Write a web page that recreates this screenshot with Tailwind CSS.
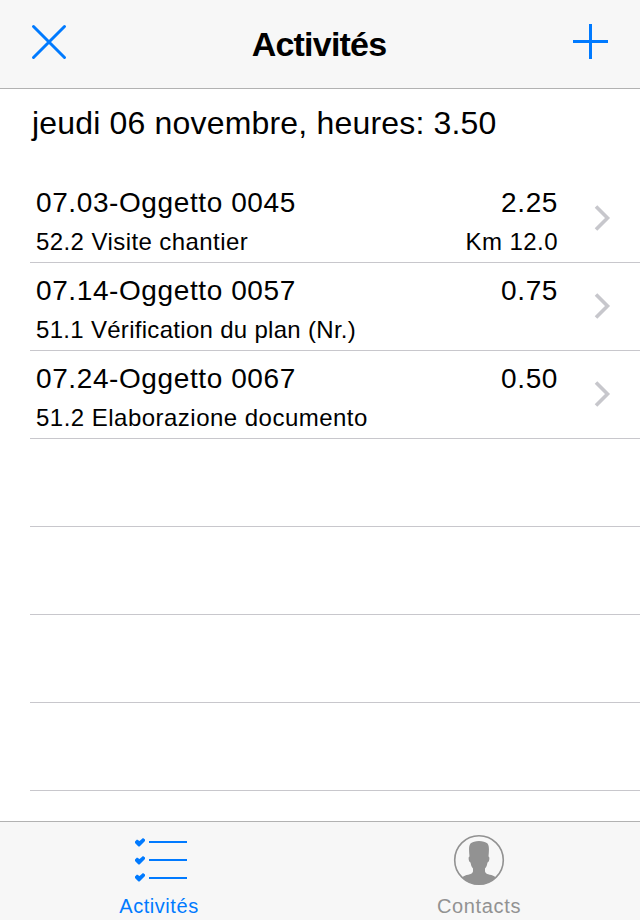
<!DOCTYPE html>
<html lang="fr">
<head>
    <meta charset="UTF-8">
    <meta name="viewport" content="width=device-width, initial-scale=1.0">
    <title>Activités</title>
    <script src="https://cdn.jsdelivr.net/npm/@tailwindcss/browser@4"></script>
</head>
<body class="bg-white text-black font-['Liberation_Sans',Arial,sans-serif]">
    <div class="flex flex-col w-[640px] h-[920px] overflow-hidden whitespace-nowrap">
        <!-- Navigation bar -->
        <header class="flex items-center justify-between shrink-0 h-[89px] pl-[31px] pr-[31px] pb-1 bg-[#f7f7f7] border-b border-[#b2b2b2]">
            <button aria-label="Fermer">
                <svg class="block w-9 h-9" viewBox="0 0 36 36" fill="none" stroke="#007aff" stroke-width="3" stroke-linecap="round"><path d="M2.5 2.5l31 31M33.5 2.5l-31 31"/></svg>
            </button>
            <h1 class="pt-1 pr-[2px] text-[34px] font-bold tracking-[-0.8px]">Activités</h1>
            <button aria-label="Ajouter">
                <svg class="block w-9 h-9" viewBox="0 0 36 36" fill="#007aff"><path d="M0 16h35v3H0zM16 0h3v35h-3z"/></svg>
            </button>
        </header>

        <main class="flex-1 min-h-0 overflow-hidden">
            <h2 class="h-[86px] pl-8 text-[32px] leading-[68px] tracking-[0.18px]">jeudi 06 novembre, heures: 3.50</h2>
            <ul class="pl-[30px]">
                <li class="flex h-[88px] pt-2 pl-[6px] border-b border-[#c8c7cc]">
                    <div class="flex-1">
                        <div class="text-[28px] leading-10 tracking-[0.6px]">07.03-Oggetto 0045</div>
                        <div class="text-[24px] leading-[38px] tracking-[0.42px]">52.2 Visite chantier</div>
                    </div>
                    <div class="text-right">
                        <div class="text-[28px] leading-10 tracking-[0.6px]">2.25</div>
                        <div class="text-[24px] leading-[38px] tracking-[0.45px]">Km 12.0</div>
                    </div>
                    <svg class="w-[18px] h-[26px] mt-[22px] ml-9 mr-[28px]" viewBox="0 0 18 26" fill="none" stroke="#c7c7cc" stroke-width="3.6"><path d="M2 1.5L13.5 13L2 24.5"/></svg>
                </li>
                <li class="flex h-[88px] pt-2 pl-[6px] border-b border-[#c8c7cc]">
                    <div class="flex-1">
                        <div class="text-[28px] leading-10 tracking-[0.6px]">07.14-Oggetto 0057</div>
                        <div class="text-[24px] leading-[38px] tracking-[0.3px]">51.1 Vérification du plan (Nr.)</div>
                    </div>
                    <div class="text-[28px] leading-10 tracking-[0.6px]">0.75</div>
                    <svg class="w-[18px] h-[26px] mt-[22px] ml-9 mr-[28px]" viewBox="0 0 18 26" fill="none" stroke="#c7c7cc" stroke-width="3.6"><path d="M2 1.5L13.5 13L2 24.5"/></svg>
                </li>
                <li class="flex h-[88px] pt-2 pl-[6px] border-b border-[#c8c7cc]">
                    <div class="flex-1">
                        <div class="text-[28px] leading-10 tracking-[0.6px]">07.24-Oggetto 0067</div>
                        <div class="text-[24px] leading-[38px] tracking-[0.48px]">51.2 Elaborazione documento</div>
                    </div>
                    <div class="text-[28px] leading-10 tracking-[0.6px]">0.50</div>
                    <svg class="w-[18px] h-[26px] mt-[22px] ml-9 mr-[28px]" viewBox="0 0 18 26" fill="none" stroke="#c7c7cc" stroke-width="3.6"><path d="M2 1.5L13.5 13L2 24.5"/></svg>
                </li>
                <!-- Empty rows -->
                <li class="h-[88px] border-b border-[#c8c7cc]"></li>
                <li class="h-[88px] border-b border-[#c8c7cc]"></li>
                <li class="h-[88px] border-b border-[#c8c7cc]"></li>
                <li class="h-[88px] border-b border-[#c8c7cc]"></li>
            </ul>
        </main>

        <!-- Tab bar -->
        <nav class="grid grid-cols-2 shrink-0 h-[99px] pt-3 bg-[#f7f7f7] border-t border-[#b2b2b2] text-[20px] leading-6">
            <a class="flex flex-col items-center gap-[8px] pr-[2px] text-[#007aff]">
                <svg class="w-[54px] h-[52px] ml-[4px]" viewBox="0 0 54 52">
                    <path d="M15 7h38v2H15zM15 25h38v2H15zM15 43h38v2H15z" fill="currentColor"/>
                    <path d="M1 7.500L3 5.500L5.500 7L9 4L11 5.500V7L5.500 12.500H4.500L1 9ZM1 25.500L3 23.500L5.500 25L9 22L11 23.500V25L5.500 30.500H4.500L1 27ZM1 42.500L3 40.500L5.500 42L9 39L11 40.500V42L5.500 47.500H4.500L1 44Z" fill="currentColor"/>
                </svg>
                <span class="tracking-[0.55px]">Activités</span>
            </a>
            <a class="flex flex-col items-center gap-[8px] pr-[2px] text-[#929292]">
                <svg class="w-[52px] h-[52px]" viewBox="0 0 52 52">
                    <circle cx="26" cy="26" r="24.3" fill="none" stroke="currentColor" stroke-width="1.6"/>
                    <path d="M9 43.500C12 40 19 41.500 20 37.500V34.500C18.500 33 18 31 17.500 28.500C15.500 28 15 22.500 16.500 22.500C16 17 15.500 12 17.500 9.500C21 6 31 6 34.500 9.500C36.500 12 36 17 35.500 22.500C37 22.500 36.500 28 34.500 28.500C34 31 33.500 33 32 34.500V37.500C33 41.500 40 40 43 43.500C34 53 18 53 9 43.500Z" fill="currentColor"/>
                </svg>
                <span class="tracking-[0.65px]">Contacts</span>
            </a>
        </nav>
    </div>
</body>
</html>
